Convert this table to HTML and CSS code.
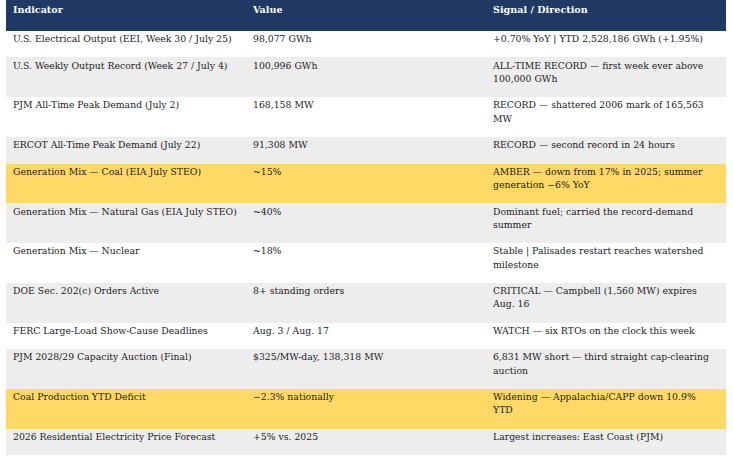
FILE: index.html
```html
<!DOCTYPE html>
<html lang="en">
<head>
<meta charset="utf-8">
<title>Energy Indicators</title>
<link rel="stylesheet" href="styles.css">
</head>
<body>
<div class="wrap">
<table class="grid">
  <colgroup><col class="c1"><col class="c2"><col class="c3"></colgroup>
  <thead>
    <tr><th>Indicator</th><th>Value</th><th>Signal / Direction</th></tr>
  </thead>
  <tbody>
    <tr class="w"><td>U.S. Electrical Output (EEI, Week 30 / July 25)</td><td>98,077 GWh</td><td>+0.70% YoY | YTD 2,528,186 GWh (+1.95%)</td></tr>
    <tr class="g"><td>U.S. Weekly Output Record (Week 27 / July 4)</td><td>100,996 GWh</td><td>ALL-TIME RECORD — first week ever above 100,000 GWh</td></tr>
    <tr class="w"><td>PJM All-Time Peak Demand (July 2)</td><td>168,158 MW</td><td>RECORD — shattered 2006 mark of 165,563 MW</td></tr>
    <tr class="g"><td>ERCOT All-Time Peak Demand (July 22)</td><td>91,308 MW</td><td>RECORD — second record in 24 hours</td></tr>
    <tr class="y"><td>Generation Mix — Coal (EIA July STEO)</td><td>~15%</td><td>AMBER — down from 17% in 2025; summer generation −6% YoY</td></tr>
    <tr class="g"><td>Generation Mix — Natural Gas (EIA July STEO)</td><td>~40%</td><td>Dominant fuel; carried the record-demand summer</td></tr>
    <tr class="w"><td>Generation Mix — Nuclear</td><td>~18%</td><td>Stable | Palisades restart reaches watershed milestone</td></tr>
    <tr class="g"><td>DOE Sec. 202(c) Orders Active</td><td>8+ standing orders</td><td>CRITICAL — Campbell (1,560 MW) expires Aug. 16</td></tr>
    <tr class="w"><td>FERC Large-Load Show-Cause Deadlines</td><td>Aug. 3 / Aug. 17</td><td>WATCH — six RTOs on the clock this week</td></tr>
    <tr class="g"><td>PJM 2028/29 Capacity Auction (Final)</td><td>$325/MW-day, 138,318 MW</td><td>6,831 MW short — third straight cap-clearing auction</td></tr>
    <tr class="y"><td>Coal Production YTD Deficit</td><td>−2.3% nationally</td><td>Widening — Appalachia/CAPP down 10.9% YTD</td></tr>
    <tr class="g"><td>2026 Residential Electricity Price Forecast</td><td>+5% vs. 2025</td><td>Largest increases: East Coast (PJM)</td></tr>
  </tbody>
</table>
</div>
</body>
</html>
```
FILE: styles.css
```css
html, body {
  margin: 0;
  padding: 0;
  background: #ffffff;
}
.wrap {
  padding: 0 7px 0 6px;
}
.grid {
  border-collapse: collapse;
  table-layout: fixed;
  width: 720px;
  font-family: "DejaVu Serif", "Liberation Serif", serif;
  color: #1c1c1c;
}
.c1, .c2, .c3 { width: 240px; }
.grid th {
  background: #1f3864;
  color: #ffffff;
  font-size: 9.6px;
  font-weight: bold;
  text-align: left;
  vertical-align: top;
  line-height: 14px;
  height: 31px;
  box-sizing: border-box;
  padding: 3px 7px 0 7px;
}
.grid td {
  font-size: 9.3px;
  line-height: 13.3px;
  vertical-align: top;
  padding: 1.2px 7px 12px 7px;
}
.grid td:last-child {
  padding-right: 12px;
}
.w td { background: #ffffff; }
.g td { background: #ededed; }
.y td { background: #ffd966; }
```
